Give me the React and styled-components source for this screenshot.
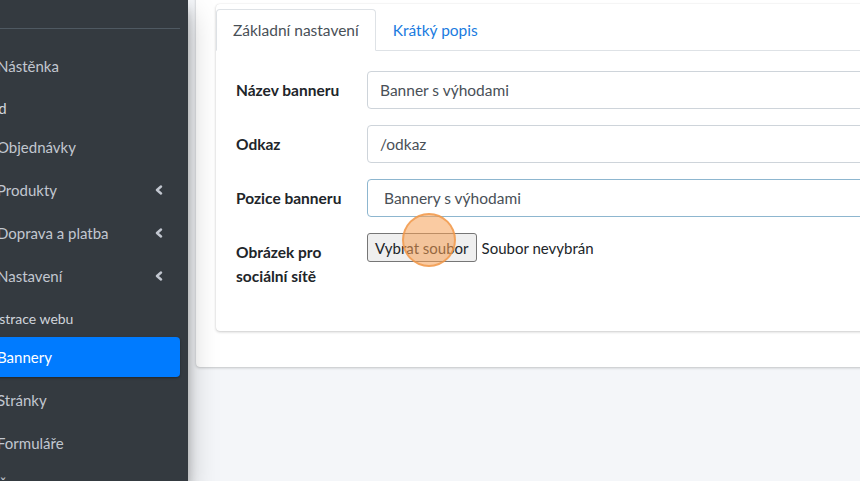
import React from "react";
import styled, { createGlobalStyle } from "styled-components";

const GlobalStyle = createGlobalStyle`
  html, body { margin: 0; padding: 0; overflow: hidden; }
  body { font-family: Lato, "Noto Sans", sans-serif; font-size: 15.5px; color: #212529; background: #f4f6f9; }
  * { box-sizing: border-box; }
`;

const Layout = styled.div`
  display: flex;
  width: 860px;
  height: 481px;
  overflow: hidden;
`;

const Sidebar = styled.aside`
  flex: none;
  width: 188px;
  height: 100%;
  background: #343a40;
  overflow: hidden;
  position: relative;
  z-index: 2;
  box-shadow: 0 14px 28px rgba(0, 0, 0, 0.25), 0 10px 10px rgba(0, 0, 0, 0.22);
  padding-right: 8px;
`;

const UserPanel = styled.div`
  display: flow-root;
  height: 29px;
  margin-left: -40px;
  border-bottom: 1px solid #4f5962;
  color: #c2c7d0;
`;

const UserName = styled.div`
  margin-top: -14px;
  line-height: 16px;
  font-size: 15px;
  padding-left: 40px;
`;

const NavList = styled.nav`
  display: flex;
  flex-direction: column;
  padding-top: 17px;
  margin-left: -48px;
`;

const NavLink = styled.a`
  display: flex;
  align-items: center;
  height: 40px;
  margin-bottom: 3px;
  padding: 0 17px 0 45px;
  border-radius: 4px;
  font-size: 15px;
  line-height: 24px;
  white-space: nowrap;
  color: ${(p) => (p.$active ? "#fff" : "#c2c7d0")};
  background: ${(p) => (p.$active ? "#007bff" : "transparent")};
  box-shadow: ${(p) => (p.$active ? "0 1px 3px rgba(0,0,0,.12), 0 1px 2px rgba(0,0,0,.24)" : "none")};
`;

const NavHeader = styled.div`
  height: 38px;
  display: flex;
  align-items: center;
  padding-left: ${(p) => p.$indent}px;
  font-size: ${(p) => p.$size}px;
  color: #d0d4db;
  white-space: nowrap;
`;

const Chevron = styled.svg`
  margin-left: auto;
  width: 8px;
  height: 10px;
`;

const Content = styled.main`
  flex: none;
  width: 720px;
  padding-left: 8px;
  background: #f4f6f9;
`;

const OuterCard = styled.section`
  margin-top: -20px;
  background: #fff;
  border-radius: 4px;
  box-shadow: 0 0 1px rgba(0, 0, 0, 0.125), 0 1px 3px rgba(0, 0, 0, 0.2);
  padding: 24px 20px 20px 20px;
`;

const InnerCard = styled.div`
  background: #fff;
  border-radius: 4px;
  box-shadow: 0 0 1px rgba(0, 0, 0, 0.125), 0 1px 3px rgba(0, 0, 0, 0.2);
  margin-bottom: 16px;
`;

const TabBar = styled.div`
  display: flex;
  padding-top: 5px;
  border-bottom: 1px solid #dee2e6;
`;

const Tab = styled.a`
  display: block;
  padding: 8px 16px;
  margin-bottom: -1px;
  line-height: 24px;
  font-size: 15.5px;
  border: 1px solid transparent;
  border-top-left-radius: 4px;
  border-top-right-radius: 4px;
  color: ${(p) => (p.$active ? "#495057" : "#1a7be0")};
  background: ${(p) => (p.$active ? "#fff" : "transparent")};
  border-color: ${(p) => (p.$active ? "#dee2e6 #dee2e6 #fff" : "transparent")};
`;

const CardBody = styled.div`
  padding: 20px;
`;

const FormRow = styled.div`
  display: grid;
  grid-template-columns: 116px 1fr;
  column-gap: 15px;
  margin-bottom: 16px;
`;

const Label = styled.label`
  padding: 7px 0;
  line-height: 24px;
  font-size: 15.5px;
  font-weight: 700;
  color: #212529;
`;

const TextInput = styled.input`
  display: block;
  width: 100%;
  height: 38px;
  padding: 6px 12px;
  font-family: inherit;
  font-size: 15.5px;
  line-height: 24px;
  color: #495057;
  background: #fff;
  border: 1px solid #ced4da;
  border-radius: 4px;
  outline: none;
`;

const SelectBox = styled.div`
  height: 38px;
  padding: 6px 16px;
  font-size: 15.5px;
  line-height: 24px;
  color: #495057;
  background: #fff;
  border: 1px solid #8db6cf;
  border-radius: 4px;
`;

const FileField = styled.div`
  position: relative;
  display: flex;
  align-items: center;
  gap: 5px;
  height: 29px;
`;

const FileButton = styled.button`
  height: 29px;
  padding: 0 7px;
  font-family: inherit;
  font-size: 15px;
  color: #212529;
  background: #efefef;
  border: 1px solid #767676;
  border-radius: 3px;
`;

const FileText = styled.span`
  font-size: 15px;
  color: #212529;
`;

const ClickMark = styled.span`
  position: absolute;
  left: 35px;
  top: -20px;
  width: 54px;
  height: 54px;
  border-radius: 50%;
  background: rgba(245, 160, 85, 0.55);
  border: 2px solid rgba(240, 150, 70, 0.75);
  pointer-events: none;
`;

const ChevronIcon = () => (
  <Chevron viewBox="0 0 8 10">
    <polyline points="6,1.5 2,5 6,8.5" fill="none" stroke="#c2c7d0" strokeWidth="2.4" strokeLinecap="round" strokeLinejoin="round" />
  </Chevron>
);

const navItems = [
  { type: "link", label: "Nástěnka" },
  { type: "header", label: "Obchod", indent: 2, size: 15 },
  { type: "link", label: "Objednávky" },
  { type: "link", label: "Produkty", chevron: true },
  { type: "link", label: "Doprava a platba", chevron: true },
  { type: "link", label: "Nastavení", chevron: true },
  { type: "header", label: "Administrace webu", indent: 4, size: 14 },
  { type: "link", label: "Bannery", active: true },
  { type: "link", label: "Stránky" },
  { type: "link", label: "Formuláře" },
  { type: "link", label: "Číselníky", chevron: true },
];

export default function App() {
  return (
    <>
      <GlobalStyle />
      <Layout>
        <Sidebar>
          <UserPanel>
            <UserName>ue</UserName>
          </UserPanel>
          <NavList>
            {navItems.map((it) =>
              it.type === "header" ? (
                <NavHeader key={it.label} $indent={it.indent} $size={it.size}>{it.label}</NavHeader>
              ) : (
                <NavLink key={it.label} $active={it.active}>
                  {it.label}
                  {it.chevron && <ChevronIcon />}
                </NavLink>
              )
            )}
          </NavList>
        </Sidebar>
        <Content>
          <OuterCard>
            <InnerCard>
              <TabBar>
                <Tab $active>Základní nastavení</Tab>
                <Tab>Krátký popis</Tab>
              </TabBar>
              <CardBody>
                <FormRow>
                  <Label>Název banneru</Label>
                  <TextInput readOnly value="Banner s výhodami" />
                </FormRow>
                <FormRow>
                  <Label>Odkaz</Label>
                  <TextInput readOnly value="/odkaz" />
                </FormRow>
                <FormRow>
                  <Label>Pozice banneru</Label>
                  <SelectBox>Bannery s výhodami</SelectBox>
                </FormRow>
                <FormRow>
                  <Label>Obrázek pro sociální sítě</Label>
                  <FileField>
                    <FileButton type="button">Vybrat soubor</FileButton>
                    <FileText>Soubor nevybrán</FileText>
                    <ClickMark />
                  </FileField>
                </FormRow>
              </CardBody>
            </InnerCard>
          </OuterCard>
        </Content>
      </Layout>
    </>
  );
}
